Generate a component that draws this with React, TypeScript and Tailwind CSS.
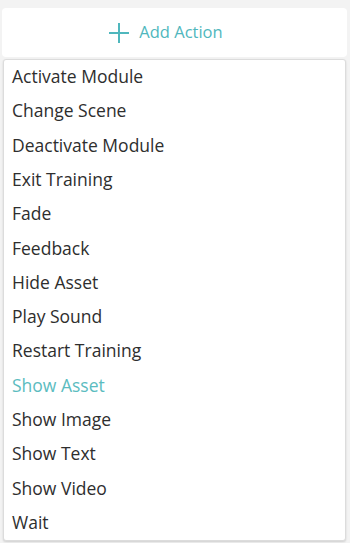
import React from "react";

const items = [
  "Activate Module",
  "Change Scene",
  "Deactivate Module",
  "Exit Training",
  "Fade",
  "Feedback",
  "Hide Asset",
  "Play Sound",
  "Restart Training",
  "Show Asset",
  "Show Image",
  "Show Text",
  "Show Video",
  "Wait",
];

export default function App() {
  return (
    <div
      className="w-[350px] h-[543px] bg-[#f3f3f3] overflow-hidden pt-[8px]"
      style={{ fontFamily: '"Open Sans", sans-serif' }}
    >
      <div className="mx-[2px] w-[345px] h-[49px] bg-white rounded-[4px] flex items-center justify-center gap-[9px] pr-[18px]">
        <svg width="22" height="22" viewBox="0 0 22 22" className="text-[#4fb7bd]">
          <path d="M11 1v20M1 11h20" stroke="currentColor" strokeWidth="2" fill="none" />
        </svg>
        <span className="text-[16.5px] text-[#4fb7bd]">Add Action</span>
      </div>
      <div className="mt-[2px] ml-[3px] w-[343px] bg-white border border-[#dcdcdc] rounded-[3px] shadow-[0_1px_2px_rgba(0,0,0,0.15)] flex flex-col">
        {items.map((it) => (
          <div
            key={it}
            className={`h-[34.3px] flex items-center pl-[8px] pb-[2px] text-[17.5px] ${
              it === "Show Asset" ? "text-[#5bbcc0]" : "text-[#2e2e2e]"
            }`}
          >
            {it}
          </div>
        ))}
      </div>
    </div>
  );
}
